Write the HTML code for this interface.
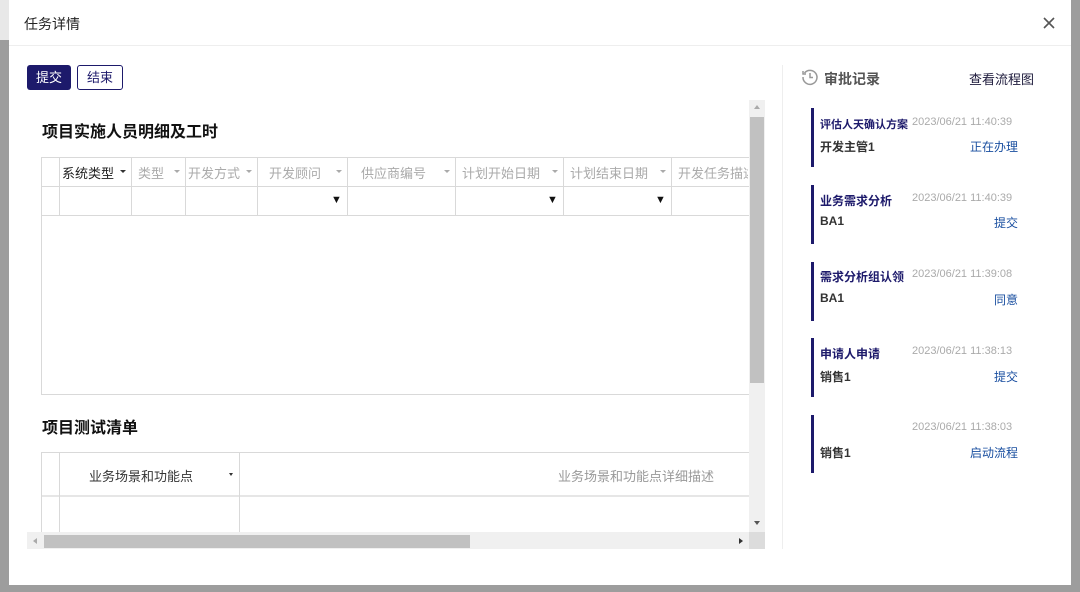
<!DOCTYPE html>
<html><head><meta charset="utf-8"><style>
*{margin:0;padding:0;box-sizing:border-box}
body{width:1080px;height:592px;background:#9d9d9d;font-family:"Liberation Sans","Noto Sans CJK SC",sans-serif;position:relative;overflow:hidden;font-size:13px;color:#333}
.a{position:absolute}
.dlg{left:9px;top:0;width:1062px;height:585px;background:#fff}
.vl{position:absolute;width:1px;background:#d9d9d9}
.hl{position:absolute;height:1px;background:#d9d9d9}
.th{position:absolute;top:163px;font-size:13px;color:#aaa;white-space:nowrap}
.ar{position:absolute;top:170px;width:0;height:0;border-left:3px solid transparent;border-right:3px solid transparent;border-top:3px solid #aaa}
.tri{position:absolute;top:194px;font-size:11px;color:#111}
.rec{position:absolute;left:811px;width:3px;background:#1d1a6b}
.t1{position:absolute;left:820px;font-size:12px;font-weight:bold;color:#1d1a6b;white-space:nowrap}
.t2{position:absolute;left:912px;font-size:11px;color:#aaa;white-space:nowrap}
.t3{position:absolute;left:820px;font-size:12px;font-weight:bold;color:#333}
.t4{position:absolute;right:62px;font-size:12px;color:#1a4fa0;white-space:nowrap}
</style></head><body>
<div class="a" style="left:0;top:0;width:9px;height:40px;background:#e8e8e8"></div>
<div class="a dlg"></div>
<div class="a" style="left:24px;top:14px;font-size:14px;color:#222">任务详情</div>
<svg class="a" style="left:1043px;top:17px" width="12" height="12" viewBox="0 0 12 12"><path d="M1 1L11 11M11 1L1 11" stroke="#555" stroke-width="1.6"/></svg>
<div class="hl" style="left:9px;top:45px;width:1062px;background:#eee"></div>
<div class="a" style="left:27px;top:65px;width:44px;height:25px;background:#1d1a6b;border-radius:3px;color:#fff;font-size:13px;line-height:25px;text-align:center">提交</div>
<div class="a" style="left:77px;top:65px;width:46px;height:25px;border:1px solid #1d1a6b;border-radius:3px;color:#1d1a6b;font-size:13px;line-height:23px;text-align:center">结束</div>
<div class="a" style="left:42px;top:118px;font-size:16px;font-weight:bold;color:#111">项目实施人员明细及工时</div>
<div class="a" style="left:41px;top:157px;width:708px;height:238px;border:1px solid #d9d9d9;border-right:none"></div>
<div class="hl" style="left:41px;top:186px;width:708px"></div>
<div class="hl" style="left:41px;top:215px;width:708px"></div>
<div class="vl" style="left:59px;top:157px;height:58px"></div>
<div class="vl" style="left:131px;top:157px;height:58px"></div>
<div class="vl" style="left:185px;top:157px;height:58px"></div>
<div class="vl" style="left:257px;top:157px;height:58px"></div>
<div class="vl" style="left:347px;top:157px;height:58px"></div>
<div class="vl" style="left:455px;top:157px;height:58px"></div>
<div class="vl" style="left:563px;top:157px;height:58px"></div>
<div class="vl" style="left:671px;top:157px;height:58px"></div>
<div class="th" style="left:62px;color:#222">系统类型</div><div class="ar" style="left:120px;border-top-color:#333"></div>
<div class="th" style="left:138px">类型</div><div class="ar" style="left:174px"></div>
<div class="th" style="left:188px">开发方式</div><div class="ar" style="left:246px"></div>
<div class="th" style="left:269px">开发顾问</div><div class="ar" style="left:336px"></div>
<div class="th" style="left:361px">供应商编号</div><div class="ar" style="left:444px"></div>
<div class="th" style="left:462px">计划开始日期</div><div class="ar" style="left:552px"></div>
<div class="th" style="left:570px">计划结束日期</div><div class="ar" style="left:660px"></div>
<div class="a" style="left:672px;top:157px;width:76px;height:29px;overflow:hidden"><div class="th" style="left:6px;top:6px">开发任务描述</div></div>
<div class="tri" style="left:331px">▼</div><div class="tri" style="left:547px">▼</div><div class="tri" style="left:655px">▼</div>
<div class="a" style="left:42px;top:414px;font-size:16px;font-weight:bold;color:#111">项目测试清单</div>
<div class="hl" style="left:41px;top:452px;width:708px"></div>
<div class="hl" style="left:41px;top:495px;width:708px;height:2px;background:#e6e6e6"></div>
<div class="vl" style="left:41px;top:452px;height:80px"></div>
<div class="vl" style="left:59px;top:452px;height:80px"></div>
<div class="vl" style="left:239px;top:452px;height:80px"></div>
<div class="a" style="left:89px;top:466px;font-size:13px;color:#333">业务场景和功能点</div>
<div class="a" style="left:229px;top:473px;width:0;height:0;border-left:2.5px solid transparent;border-right:2.5px solid transparent;border-top:3px solid #333"></div>
<div class="a" style="left:558px;top:466px;font-size:13px;color:#999">业务场景和功能点详细描述</div>
<div class="a" style="left:749px;top:100px;width:16px;height:432px;background:#f0f0f0"></div>
<div class="a" style="left:750px;top:117px;width:14px;height:266px;background:#c1c1c1"></div>
<div class="a" style="left:754px;top:105px;width:0;height:0;border-left:3px solid transparent;border-right:3px solid transparent;border-bottom:4px solid #aaa"></div>
<div class="a" style="left:754px;top:521px;width:0;height:0;border-left:3px solid transparent;border-right:3px solid transparent;border-top:4px solid #555"></div>
<div class="a" style="left:27px;top:532px;width:722px;height:17px;background:#f0f0f0"></div>
<div class="a" style="left:749px;top:532px;width:16px;height:17px;background:#dcdcdc"></div>
<div class="a" style="left:44px;top:535px;width:426px;height:13px;background:#c1c1c1"></div>
<div class="a" style="left:33px;top:538px;width:0;height:0;border-top:3px solid transparent;border-bottom:3px solid transparent;border-right:4px solid #aaa"></div>
<div class="a" style="left:739px;top:538px;width:0;height:0;border-top:3px solid transparent;border-bottom:3px solid transparent;border-left:4px solid #333"></div>
<div class="vl" style="left:782px;top:65px;height:484px;background:#eee"></div>
<svg class="a" style="left:801px;top:68px" width="18" height="18" viewBox="0 0 18 18"><path d="M3.5 5A7 7 0 1 1 2 9" fill="none" stroke="#999" stroke-width="1.5"/><path d="M2 3v3h3" fill="none" stroke="#999" stroke-width="1.5"/><path d="M9 5v4.5h3" fill="none" stroke="#999" stroke-width="1.5"/></svg>
<div class="a" style="left:824px;top:69px;font-size:14px;font-weight:bold;color:#555">审批记录</div>
<div class="a" style="left:969px;top:69px;font-size:13px;color:#1d1a3b">查看流程图</div>
<div class="rec" style="top:108px;height:59px"></div>
<div class="t1" style="top:116px;font-size:11px">评估人天确认方案</div><div class="t2" style="top:116px">2023/06/21 11:40:39</div>
<div class="t3" style="top:138px">开发主管1</div><div class="t4" style="top:138px">正在办理</div>
<div class="rec" style="top:185px;height:59px"></div>
<div class="t1" style="top:192px">业务需求分析</div><div class="t2" style="top:192px">2023/06/21 11:40:39</div>
<div class="t3" style="top:214px">BA1</div><div class="t4" style="top:214px">提交</div>
<div class="rec" style="top:262px;height:59px"></div>
<div class="t1" style="top:268px">需求分析组认领</div><div class="t2" style="top:268px">2023/06/21 11:39:08</div>
<div class="t3" style="top:291px">BA1</div><div class="t4" style="top:291px">同意</div>
<div class="rec" style="top:338px;height:59px"></div>
<div class="t1" style="top:345px">申请人申请</div><div class="t2" style="top:345px">2023/06/21 11:38:13</div>
<div class="t3" style="top:368px">销售1</div><div class="t4" style="top:368px">提交</div>
<div class="rec" style="top:415px;height:58px"></div>
<div class="t2" style="top:421px">2023/06/21 11:38:03</div>
<div class="t3" style="top:444px">销售1</div><div class="t4" style="top:444px">启动流程</div>
</body></html>
